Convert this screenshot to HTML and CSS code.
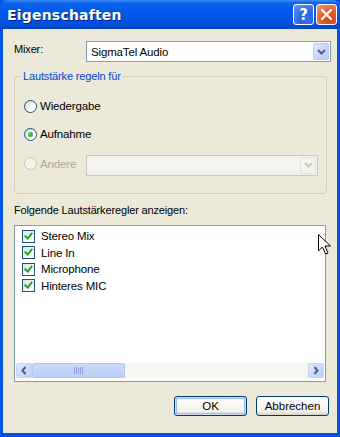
FILE: index.html
```html
<!DOCTYPE html>
<html lang="de">
<head>
    <meta charset="UTF-8">
    <title>Eigenschaften</title>
    <link rel="stylesheet" href="styles.css">
</head>
<body>

<div class="window">
    <div class="titlebar">
        <span class="title">Eigenschaften</span>
        <div class="caption-buttons">
            <div class="cap-btn help">?</div>
            <div class="cap-btn close">
                <svg width="13" height="13" viewBox="0 0 13 13"><path d="M2 2 L11 11 M11 2 L2 11" stroke="#fff" stroke-width="2.4" stroke-linecap="round"/></svg>
            </div>
        </div>
    </div>

    <div class="content">
        <div class="mixer-row">
            <span class="label">Mixer:</span>
            <div class="combo">
                <span class="combo-text">SigmaTel Audio</span>
                <div class="drop-btn">
                    <svg width="9" height="6" viewBox="0 0 9 6"><path d="M1 1 L4.5 4.5 L8 1" stroke="#4D6185" stroke-width="2" fill="none"/></svg>
                </div>
            </div>
        </div>

        <div class="groupbox">
            <span class="legend">Lautstärke regeln für</span>
            <div class="radio-row">
                <span class="radio"></span>
                <span>Wiedergabe</span>
            </div>
            <div class="radio-row">
                <span class="radio checked"></span>
                <span>Aufnahme</span>
            </div>
            <div class="radio-row disabled">
                <span class="radio"></span>
                <span class="other-label">Andere</span>
                <div class="combo combo-disabled">
                    <div class="drop-btn">
                        <svg width="9" height="6" viewBox="0 0 9 6"><path d="M1 1 L4.5 4.5 L8 1" stroke="#C9C7BA" stroke-width="2" fill="none"/></svg>
                    </div>
                </div>
            </div>
        </div>

        <div class="list-label">Folgende Lautstärkeregler anzeigen:</div>

        <div class="listbox">
            <div class="items">
                <div class="item"><span class="check"></span>Stereo Mix</div>
                <div class="item"><span class="check"></span>Line In</div>
                <div class="item"><span class="check"></span>Microphone</div>
                <div class="item"><span class="check"></span>Hinteres MIC</div>
            </div>
            <div class="hscroll">
                <div class="sb-arrow">
                    <svg width="6" height="9" viewBox="0 0 6 9"><path d="M4.5 1 L1.5 4.5 L4.5 8" stroke="#4D6185" stroke-width="2" fill="none"/></svg>
                </div>
                <div class="sb-thumb">
                    <svg width="9" height="7" viewBox="0 0 9 7"><path d="M0.5 0 V7 M2.5 0 V7 M4.5 0 V7 M6.5 0 V7 M8.5 0 V7" stroke="#8CA5E0" stroke-width="1"/></svg>
                </div>
                <div class="sb-track"></div>
                <div class="sb-arrow">
                    <svg width="6" height="9" viewBox="0 0 6 9"><path d="M1.5 1 L4.5 4.5 L1.5 8" stroke="#4D6185" stroke-width="2" fill="none"/></svg>
                </div>
            </div>
        </div>

        <div class="buttons">
            <button class="btn default">OK</button>
            <button class="btn">Abbrechen</button>
        </div>
    </div>

    <svg class="cursor" width="13" height="21" viewBox="0 0 13 21">
        <path d="M0.5 0.5 V17 L4.5 13 L7.5 20 L10 19 L7 12 H12.5 Z" fill="#fff" stroke="#000" stroke-width="1"/>
    </svg>
</div>

</body>
</html>
```

FILE: styles.css
```css
body {
    margin: 0;
    padding: 0;
    font-family: "Liberation Sans", Arial, sans-serif;
    font-size: 11px;
    letter-spacing: -0.15px;
    color: #000;
    background: #fff;
}

.window {
    position: relative;
    width: 340px;
    height: 437px;
    box-sizing: border-box;
    background: #0055E5;
    padding: 0 3px 4px 3px;
    display: flex;
    flex-direction: column;
}

.titlebar {
    height: 29px;
    margin: 0 -3px;
    padding: 0 3px 0 7px;
    display: flex;
    align-items: center;
    justify-content: space-between;
    background: linear-gradient(to bottom, #3C8EF5 0, #0B62EE 3px, #0058EA 12px, #0054E3 22px, #0048CC 28px, #003FB5 29px);
    border-radius: 7px 7px 0 0;
}

.title {
    color: #fff;
    font-family: "DejaVu Sans", sans-serif;
    font-weight: bold;
    font-size: 14px;
    text-shadow: 1px 1px 0 #0A1E7A;
    padding-top: 1px;
    letter-spacing: 0.2px;
}

.caption-buttons {
    display: flex;
    gap: 2px;
}

.cap-btn {
    width: 19px;
    height: 19px;
    border: 1px solid #fff;
    border-radius: 3px;
    display: flex;
    align-items: center;
    justify-content: center;
    color: #fff;
    font-weight: bold;
    font-size: 15px;
    font-family: "DejaVu Sans", sans-serif;
}

.help {
    background: radial-gradient(circle at 70% 75%, #3170F0, #2A63E6 40%, #6B9BF7 100%);
}

.close {
    background: radial-gradient(circle at 70% 75%, #D74520, #E0582E 40%, #F19A7E 100%);
}

.content {
    flex: 1;
    background: #ECE9D8;
    padding: 0 6px 0 11px;
    display: flex;
    flex-direction: column;
}

.mixer-row {
    display: flex;
    align-items: center;
    margin-top: 12px;
    height: 21px;
}

.label {
    width: 72px;
    margin-top: -6px;
}

.combo {
    flex: 1;
    height: 21px;
    box-sizing: border-box;
    border: 1px solid #7F9DB9;
    background: #fff;
    display: flex;
    align-items: center;
    padding: 1px;
}

.combo-text {
    flex: 1;
    padding-left: 3px;
    font-size: 11.5px;
}

.drop-btn {
    width: 16px;
    height: 17px;
    box-sizing: border-box;
    background: linear-gradient(135deg, #DCE6FC, #B6CBF8);
    border: 1px solid #BCCCF3;
    border-radius: 2px;
    display: flex;
    align-items: center;
    justify-content: center;
    margin-left: auto;
}

.groupbox {
    position: relative;
    margin: 14px 4px 0 0;
    border: 1px solid #D0D0BF;
    border-radius: 4px;
    padding: 22px 0 0 9px;
    box-sizing: border-box;
    height: 118px;
}

.legend {
    position: absolute;
    top: -7px;
    left: 6px;
    padding: 0 2px;
    background: #ECE9D8;
    color: #0046D5;
}

.radio-row {
    display: flex;
    align-items: center;
    height: 14px;
    margin-bottom: 14px;
    font-size: 11.5px;
}

.radio {
    width: 11px;
    height: 11px;
    border: 1px solid #1C5180;
    border-radius: 50%;
    background: linear-gradient(135deg, #DCDBD3, #fff 70%);
    margin-right: 3px;
    position: relative;
}

.radio.checked::after {
    content: "";
    position: absolute;
    left: 3px;
    top: 3px;
    width: 5px;
    height: 5px;
    border-radius: 50%;
    background: radial-gradient(circle at 40% 40%, #55D551, #21A121);
}

.disabled {
    color: #ACA899;
    padding-top: 3px;
}

.disabled .radio,
.other-label {
    margin-bottom: 3px;
}

.disabled .radio {
    border-color: #CAC8BB;
    background: #F4F3EE;
}

.other-label {
    width: 46px;
}

.combo-disabled {
    flex: none;
    width: 232px;
    background: #F4F3EE;
    border-color: #C9C7BA;
}

.combo-disabled .drop-btn {
    background: #F4F3EE;
    border-color: #E5E3DA;
}

.list-label {
    margin-top: 10px;
    font-size: 11px;
}

.listbox {
    margin: 9px 5px 0 0;
    height: 157px;
    box-sizing: border-box;
    border: 1px solid #7F9DB9;
    background: #fff;
    display: flex;
    flex-direction: column;
}

.items {
    flex: 1;
    padding: 2px 0 0 7px;
}

.item {
    display: flex;
    align-items: center;
    height: 16.5px;
    font-size: 11.5px;
}

.check {
    width: 11px;
    height: 11px;
    border: 1px solid #1C5180;
    background: linear-gradient(135deg, #DCDBD3, #fff 70%) ;
    margin-right: 6px;
    position: relative;
}

.check::after {
    content: "";
    position: absolute;
    left: 3px;
    top: 0px;
    width: 3px;
    height: 6px;
    border: solid #21A121;
    border-width: 0 2px 2px 0;
    transform: rotate(40deg);
}

.hscroll {
    height: 15px;
    margin: 0 1px 3px 1px;
    display: flex;
    background: #F7F6F0;
}

.sb-arrow {
    width: 16px;
    height: 15px;
    box-sizing: border-box;
    border: 1px solid #C3D3FD;
    border-radius: 2px;
    background: linear-gradient(135deg, #E2EAFE, #B9CEFA);
    display: flex;
    align-items: center;
    justify-content: center;
}

.sb-thumb {
    width: 93px;
    height: 15px;
    box-sizing: border-box;
    border: 1px solid #B2C6F4;
    border-radius: 2px;
    background: linear-gradient(to bottom, #CADAFD, #BACEF8);
    display: flex;
    align-items: center;
    justify-content: center;
}

.sb-track {
    flex: 1;
}

.buttons {
    display: flex;
    justify-content: flex-end;
    gap: 9px;
    margin: 14px 2px 0 0;
}

.btn {
    width: 73px;
    height: 20px;
    border: 1px solid #003C74;
    border-radius: 3px;
    background: linear-gradient(to bottom, #FFFFFF, #F2F1EA 80%, #D6D0C5);
    font-family: "Liberation Sans", Arial, sans-serif;
    font-size: 11.5px;
    padding: 0;
}

.btn.default {
    box-shadow: inset 0 0 0 1px #CEDCF7, inset 0 0 0 2px #9DB9EB;
}

.cursor {
    position: absolute;
    left: 318px;
    top: 234px;
}
```
